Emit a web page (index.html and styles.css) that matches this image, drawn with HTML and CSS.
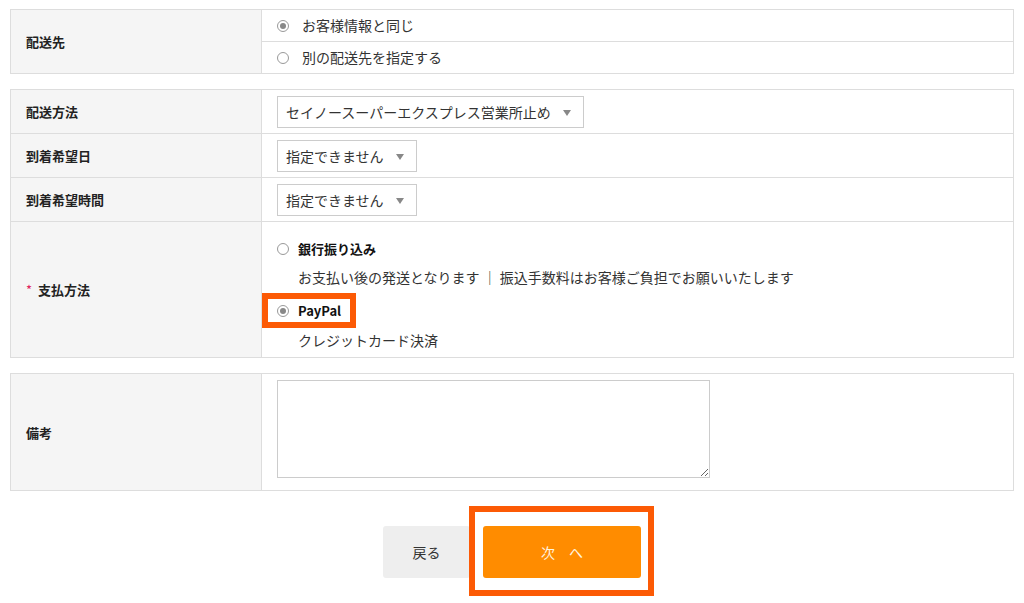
FILE: index.html
```html
<!DOCTYPE html>
<html lang="ja">
<head>
  <meta charset="UTF-8">
  <meta name="viewport" content="width=device-width, initial-scale=1">
  <title>ご注文手続き</title>
  <link rel="stylesheet" href="styles.css">
</head>
<body>
  <table class="form-table">
    <tr>
      <th>配送先</th>
      <td class="choice-cell">
        <div class="choice-row">
          <span class="radio checked"></span>お客様情報と同じ
        </div>
        <div class="choice-row">
          <span class="radio"></span>別の配送先を指定する
        </div>
      </td>
    </tr>
  </table>

  <table class="form-table">
    <tr class="select-row">
      <th>配送方法</th>
      <td><span class="select">セイノースーパーエクスプレス営業所止め</span></td>
    </tr>
    <tr class="select-row">
      <th>到着希望日</th>
      <td><span class="select">指定できません</span></td>
    </tr>
    <tr class="select-row">
      <th>到着希望時間</th>
      <td><span class="select">指定できません</span></td>
    </tr>
    <tr>
      <th><span class="required">*</span>支払方法</th>
      <td class="pay-cell">
        <div class="pay-option">
          <span class="radio"></span><strong>銀行振り込み</strong>
        </div>
        <p class="pay-note">お支払い後の発送となります ｜ 振込手数料はお客様ご負担でお願いいたします</p>
        <div class="pay-option picked">
          <span class="radio checked"></span><strong>PayPal</strong>
        </div>
        <p class="pay-note last">クレジットカード決済</p>
      </td>
    </tr>
  </table>

  <table class="form-table">
    <tr>
      <th>備考</th>
      <td class="memo-cell"><textarea class="memo"></textarea></td>
    </tr>
  </table>

  <div class="actions">
    <button class="btn btn-back">戻る</button>
    <span class="next-wrap">
      <button class="btn btn-next">次　へ</button>
    </span>
  </div>
</body>
</html>
```

FILE: styles.css
```css
html {
  min-height: 100%;
}

body {
  margin: 0;
  padding: 9px 10px 30px;
  font-family: "Noto Sans CJK JP", "Noto Sans", sans-serif;
  font-size: 14px;
  color: #333;
  background: #fff;
}

.form-table {
  width: 100%;
  border-collapse: collapse;
  border: 1px solid #ddd;
  margin-bottom: 15px;
}

.form-table th,
.form-table td {
  border: 1px solid #ddd;
  padding: 0 15px;
  vertical-align: middle;
  text-align: left;
}

.form-table th {
  width: 220px;
  background: #f5f5f5;
  font-size: 13px;
  font-weight: bold;
  color: #222;
}

.form-table td {
  background: #fff;
}

/* radios */
.radio {
  display: inline-block;
  position: relative;
  width: 10px;
  height: 10px;
  border: 1px solid #999;
  border-radius: 50%;
  margin-right: 9px;
  vertical-align: -1px;
  background: #fff;
}

.radio.checked::after {
  content: "";
  position: absolute;
  top: 2px;
  left: 2px;
  width: 6px;
  height: 6px;
  border-radius: 50%;
  background: #888;
}

.choice-cell {
  padding: 0 !important;
}

.choice-row {
  height: 31px;
  line-height: 31px;
  padding-left: 15px;
}

.choice-row .radio {
  margin-right: 13px;
}

.choice-row + .choice-row {
  border-top: 1px solid #ddd;
}

/* selects */
.select-row td {
  height: 43px;
}

.select {
  display: inline-block;
  height: 30px;
  line-height: 30px;
  padding: 0 32px 0 8px;
  border: 1px solid #ccc;
  position: relative;
  background: #fff;
}

.select::after {
  content: "";
  position: absolute;
  right: 12px;
  top: 13px;
  border-left: 4px solid transparent;
  border-right: 4px solid transparent;
  border-top: 6px solid #888;
}

/* payment */
.required {
  color: #e0245e;
  font-weight: normal;
  margin-right: 6px;
}

.pay-cell {
  padding: 16px 15px 7px !important;
}

.pay-option {
  height: 20px;
  line-height: 20px;
  position: relative;
  display: inline-block;
}

.pay-option strong {
  font-size: 13px;
  color: #111;
}

.pay-option.picked {
  margin-top: 13px;
}

.pay-option.picked::before {
  content: "";
  position: absolute;
  left: -15px;
  right: -15px;
  top: -7px;
  bottom: -8px;
  border: 6px solid #fc5a05;
}

.pay-note {
  margin: 9px 0 0 21px;
  line-height: 20px;
}

.pay-note.last {
  margin-top: 10px;
}

/* memo */
.memo-cell {
  padding: 6px 15px 12px !important;
}

.memo {
  display: block;
  box-sizing: border-box;
  width: 433px;
  height: 98px;
  border: 1px solid #ccc;
  margin: 0;
  padding: 0;
  font-family: inherit;
}

/* buttons */
.actions {
  display: flex;
  justify-content: center;
  gap: 13px;
  margin-top: 35px;
}

.btn {
  display: block;
  height: 52px;
  border: none;
  border-radius: 3px;
  font-family: inherit;
  font-size: 14px;
  cursor: pointer;
}

.btn-back {
  width: 87px;
  background: #eee;
  color: #333;
}

.next-wrap {
  position: relative;
}

.btn-next {
  width: 158px;
  background: #ff8c00;
  color: #fff5e0;
}

.next-wrap::after {
  content: "";
  position: absolute;
  left: -14px;
  right: -13px;
  top: -20px;
  bottom: -18px;
  border: 6px solid #fc5a05;
}
```
